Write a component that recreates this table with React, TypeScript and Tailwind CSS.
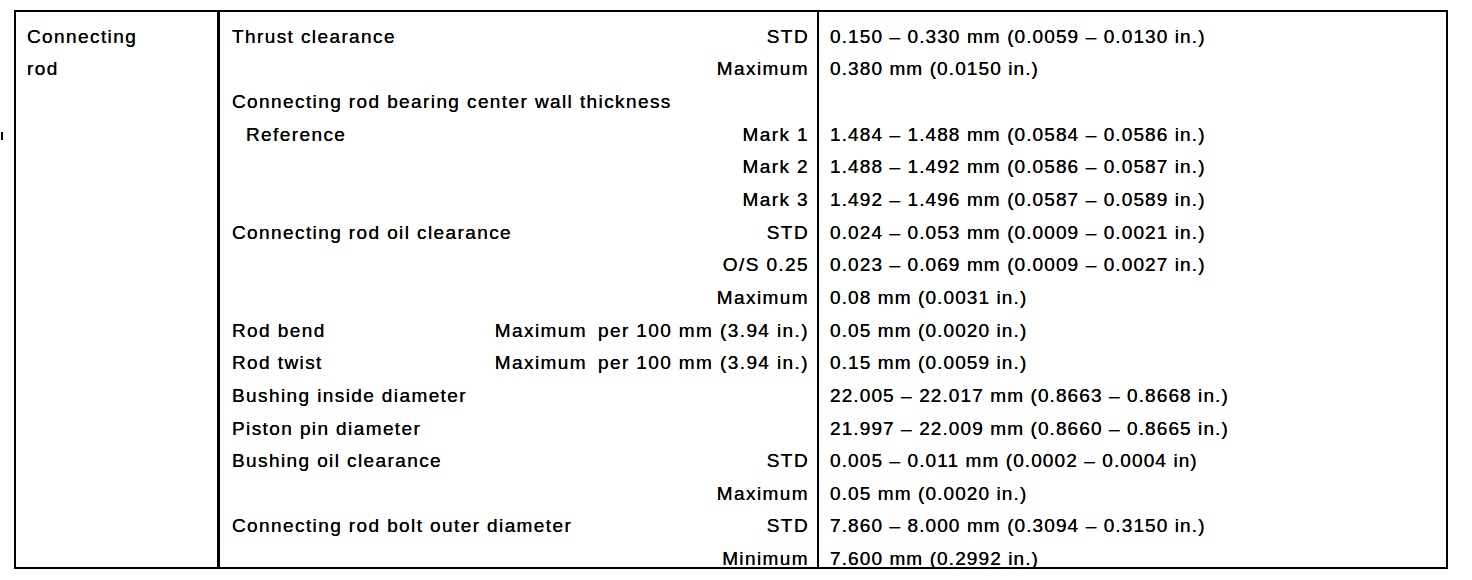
const rows: { label?: string; indent?: boolean; spec?: string; per?: boolean; value?: string }[] = [
  { label: "Thrust clearance", spec: "STD", value: "0.150 – 0.330 mm (0.0059 – 0.0130 in.)" },
  { spec: "Maximum", value: "0.380 mm (0.0150 in.)" },
  { label: "Connecting rod bearing center wall thickness" },
  { label: "Reference", indent: true, spec: "Mark 1", value: "1.484 – 1.488 mm (0.0584 – 0.0586 in.)" },
  { spec: "Mark 2", value: "1.488 – 1.492 mm (0.0586 – 0.0587 in.)" },
  { spec: "Mark 3", value: "1.492 – 1.496 mm (0.0587 – 0.0589 in.)" },
  { label: "Connecting rod oil clearance", spec: "STD", value: "0.024 – 0.053 mm (0.0009 – 0.0021 in.)" },
  { spec: "O/S 0.25", value: "0.023 – 0.069 mm (0.0009 – 0.0027 in.)" },
  { spec: "Maximum", value: "0.08 mm (0.0031 in.)" },
  { label: "Rod bend", per: true, value: "0.05 mm (0.0020 in.)" },
  { label: "Rod twist", per: true, value: "0.15 mm (0.0059 in.)" },
  { label: "Bushing inside diameter", value: "22.005 – 22.017 mm (0.8663 – 0.8668 in.)" },
  { label: "Piston pin diameter", value: "21.997 – 22.009 mm (0.8660 – 0.8665 in.)" },
  { label: "Bushing oil clearance", spec: "STD", value: "0.005 – 0.011 mm (0.0002 – 0.0004 in)" },
  { spec: "Maximum", value: "0.05 mm (0.0020 in.)" },
  { label: "Connecting rod bolt outer diameter", spec: "STD", value: "7.860 – 8.000 mm (0.3094 – 0.3150 in.)" },
  { spec: "Minimum", value: "7.600 mm (0.2992 in.)" },
];

export default function App() {
  return (
    <div className="flex h-[580px] w-[1472px] items-start overflow-hidden bg-white font-['Liberation_Sans',Arial,sans-serif] text-[19px] leading-none tracking-[1.1px] text-black [text-shadow:0_0_0.3px_#000]">
      {/* scan speck left of the table */}
      <div className="ml-[1px] mt-[132px] h-[8px] w-[2px] shrink-0 bg-black" />

      <div className="ml-[11px] mt-[10px] flex h-[559px] w-[1434px] border-2 border-black">
        {/* section */}
        <div className="w-[204px] shrink-0 border-r-[3px] border-black pl-[11px] pt-[8px] tracking-[1.4px]">
          <div className="flex h-[32.65px] items-center">Connecting</div>
          <div className="flex h-[32.65px] items-center">rod</div>
        </div>

        {/* item + condition */}
        <div className="h-full w-[599px] shrink-0 border-r-2 border-black pt-[8px] tracking-[1.4px]">
          {rows.map((r, i) => (
            <div key={i} className="flex h-[32.65px] items-center justify-between pl-[12px] pr-[8px]">
              <span className={r.indent ? "pl-[14px]" : ""}>{r.label}</span>
              {r.per ? (
                <span className="flex">
                  <span>Maximum</span>
                  <span className="ml-[11px]">per 100 mm (3.94 in.)</span>
                </span>
              ) : (
                <span>{r.spec}</span>
              )}
            </div>
          ))}
        </div>

        {/* specification */}
        <div className="h-full flex-1 pl-[11px] pt-[8px]">
          {rows.map((r, i) => (
            <div key={i} className="flex h-[32.65px] items-center">
              {r.value}
            </div>
          ))}
        </div>
      </div>
    </div>
  );
}
